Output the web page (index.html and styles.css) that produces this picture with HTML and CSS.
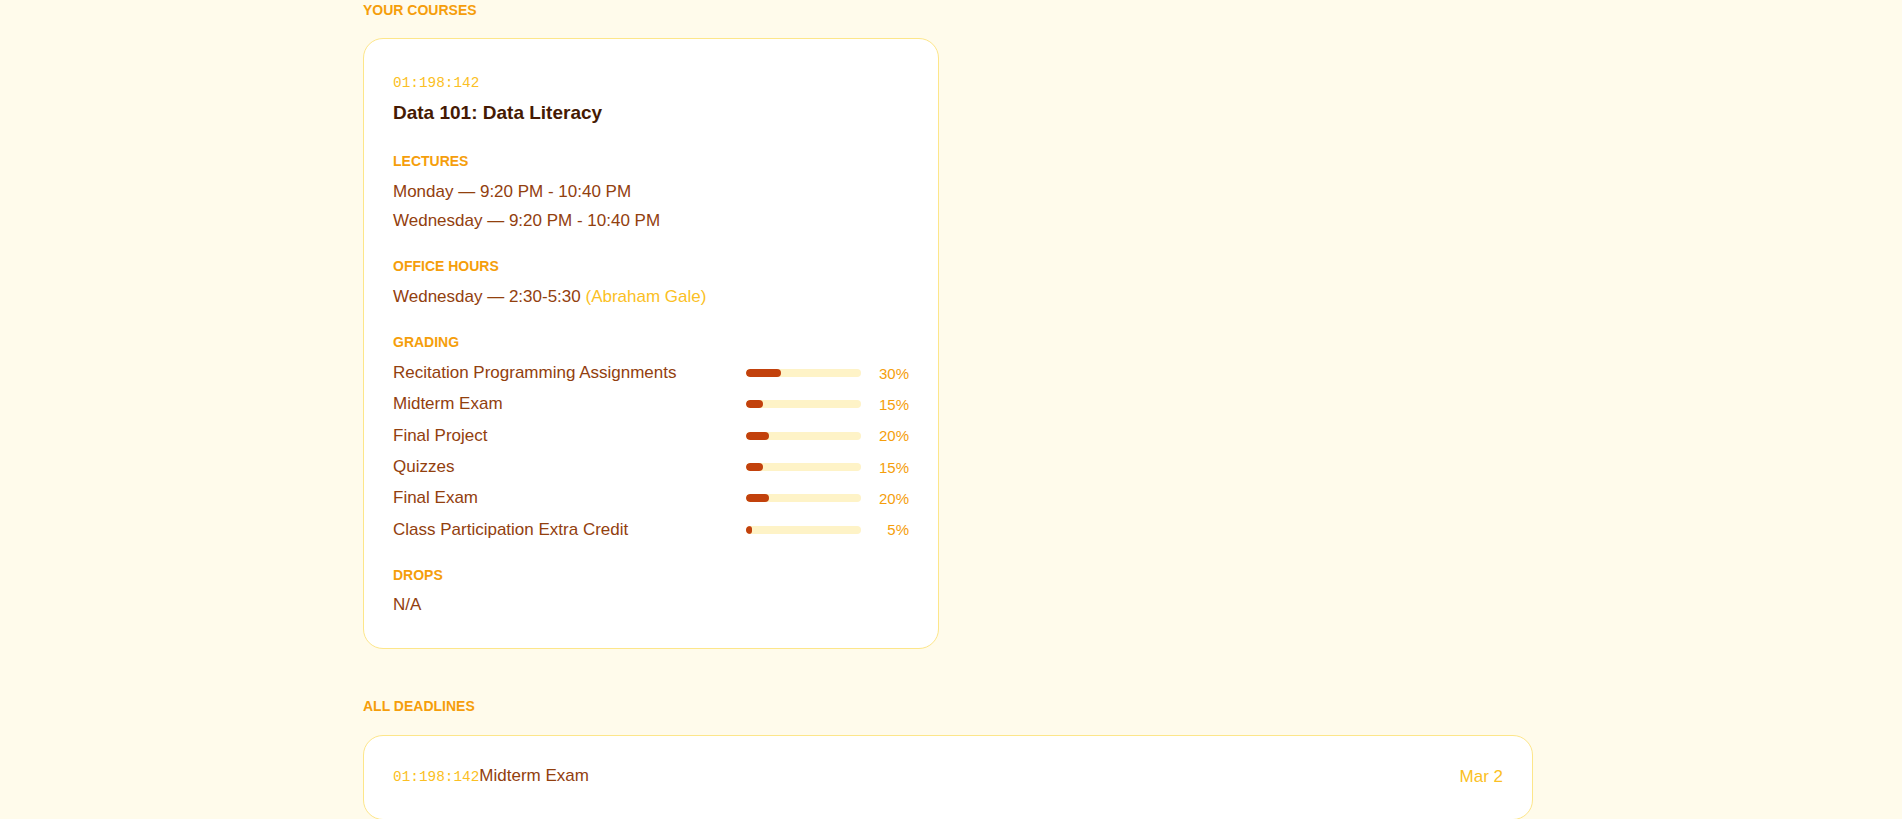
FILE: index.html
```html
<!DOCTYPE html>
<html lang="en">
<head>
<meta charset="utf-8">
<title>Your Courses</title>
<link rel="stylesheet" href="styles.css">
</head>
<body>
<main class="page">
  <section class="block">
    <h2 class="block-title">YOUR COURSES</h2>
    <div class="course-grid">
      <article class="card course">
        <div class="code">01:198:142</div>
        <h3 class="course-name">Data 101: Data Literacy</h3>

        <div class="section first">
          <div class="label">LECTURES</div>
          <div class="line">Monday — 9:20 PM - 10:40 PM</div>
          <div class="line">Wednesday — 9:20 PM - 10:40 PM</div>
        </div>

        <div class="section">
          <div class="label">OFFICE HOURS</div>
          <div class="line">Wednesday — 2:30-5:30 <span class="who">(Abraham Gale)</span></div>
        </div>

        <div class="section">
          <div class="label">GRADING</div>
          <div class="grade-list">
            <div class="grade"><span class="g-name">Recitation Programming Assignments</span><span class="bar"><span class="fill" style="width:30%"></span></span><span class="pct">30%</span></div>
            <div class="grade"><span class="g-name">Midterm Exam</span><span class="bar"><span class="fill" style="width:15%"></span></span><span class="pct">15%</span></div>
            <div class="grade"><span class="g-name">Final Project</span><span class="bar"><span class="fill" style="width:20%"></span></span><span class="pct">20%</span></div>
            <div class="grade"><span class="g-name">Quizzes</span><span class="bar"><span class="fill" style="width:15%"></span></span><span class="pct">15%</span></div>
            <div class="grade"><span class="g-name">Final Exam</span><span class="bar"><span class="fill" style="width:20%"></span></span><span class="pct">20%</span></div>
            <div class="grade"><span class="g-name">Class Participation Extra Credit</span><span class="bar"><span class="fill" style="width:5%"></span></span><span class="pct">5%</span></div>
          </div>
        </div>

        <div class="section drops">
          <div class="label">DROPS</div>
          <div class="line">N/A</div>
        </div>
      </article>
    </div>
  </section>

  <section class="block deadlines">
    <h2 class="block-title">ALL DEADLINES</h2>
    <div class="card deadline">
      <div class="d-left"><span class="code inline">01:198:142</span><span class="d-name">Midterm Exam</span></div>
      <div class="d-date">Mar 2</div>
    </div>
  </section>
</main>
</body>
</html>
```
FILE: styles.css
```css
* { box-sizing: border-box; }

html, body {
  margin: 0;
  padding: 0;
  background: #fffbeb;
}

body {
  font-family: "Liberation Sans", Arial, sans-serif;
  color: #92400e;
}

.page {
  width: 1170px;
  margin-left: 363px;
}

.block-title {
  margin: 0 0 17.5px;
  font-size: 14px;
  line-height: 20px;
  font-weight: 700;
  color: #f59e0b;
}

.deadlines {
  margin-top: 47px;
}

.deadlines .block-title {
  margin-bottom: 19.5px;
}

.course-grid {
  display: grid;
  grid-template-columns: 1fr 1fr;
  gap: 18px;
}

.card {
  background: #ffffff;
  border: 1px solid #fde68a;
  border-radius: 20px;
}

.course {
  padding: 31px 29px 29px;
}

.code {
  font-family: "Liberation Mono", "Courier New", monospace;
  font-size: 14.4px;
  line-height: 26px;
  color: #fbbf24;
}

.course-name {
  margin: 4px 0 0;
  font-size: 19px;
  line-height: 26px;
  font-weight: 700;
  color: #451a03;
}

.section {
  margin-top: 21px;
}

.section.first {
  margin-top: 25px;
}

.section.drops {
  margin-top: 19.5px;
}

.label {
  font-size: 14px;
  line-height: 20px;
  font-weight: 700;
  color: #f59e0b;
  margin-bottom: 6px;
}

.drops .label {
  margin-bottom: 5px;
}

.line {
  font-size: 17px;
  line-height: 29px;
}

.who {
  color: #fbbf24;
}

.grade-list {
  display: flex;
  flex-direction: column;
  margin-top: 3px;
}

.grade {
  display: grid;
  grid-template-columns: 1fr 115px 48px;
  align-items: center;
  height: 31.3px;
  font-size: 17px;
}

.bar {
  display: block;
  height: 8px;
  border-radius: 4px;
  background: #fef3c7;
  overflow: hidden;
}

.fill {
  display: block;
  height: 100%;
  border-radius: 4px;
  background: #c2410c;
}

.pct {
  text-align: right;
  font-size: 15px;
  color: #f59e0b;
}

.deadline {
  display: flex;
  justify-content: space-between;
  align-items: center;
  padding: 29px 29px 31px;
  min-height: 84px;
}

.d-left {
  display: flex;
  align-items: baseline;
}

.code.inline {
  line-height: 22px;
}

.d-name {
  font-size: 17px;
  line-height: 22px;
}

.d-date {
  font-size: 17px;
  line-height: 22px;
  color: #fbbf24;
}
```
